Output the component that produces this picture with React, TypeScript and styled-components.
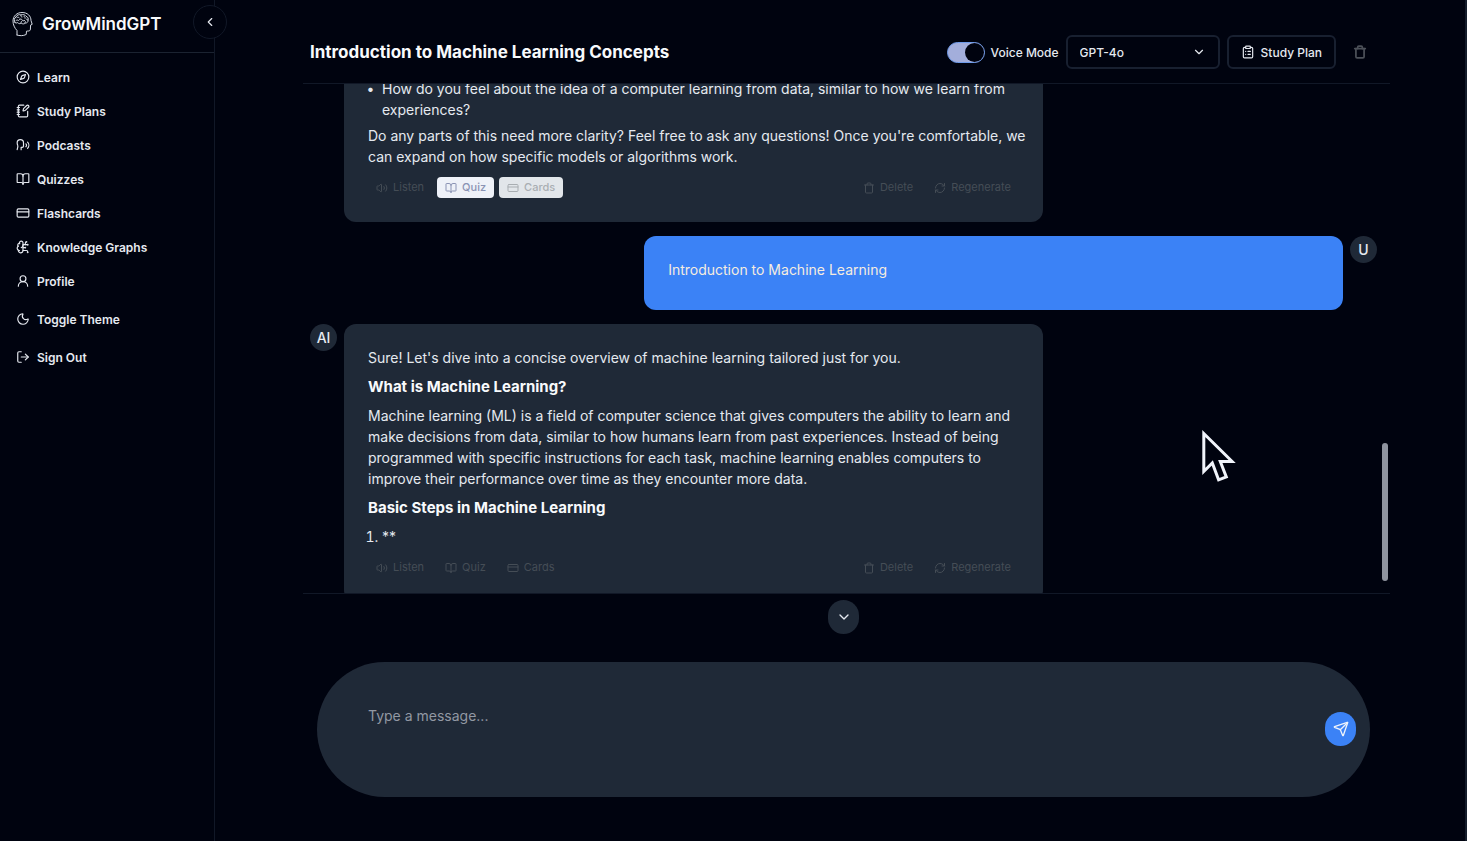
import React from 'react';
import styled, { createGlobalStyle } from 'styled-components';
import {
  BookOpen, BrainCircuit, ChevronDown, ChevronLeft, ClipboardList, Compass, CreditCard,
  LogOut, Moon, NotebookPen, RefreshCw, Send, Speech, Trash, UserRound, Volume2,
} from 'lucide-react';

const c = {
  bg: '#00030f',
  surface: '#1f2937',
  line: '#111827',
  outline: '#182030',
  text: '#e5e9f0',
  bright: '#f8fafc',
  muted: '#9298a3',
  faint: '#454d56',
  blue: '#3b82f6',
};

const GlobalStyle = createGlobalStyle`
  *, *::before, *::after { box-sizing: border-box; }
  body {
    margin: 0;
    background: ${c.bg};
    color: ${c.text};
    font-family: Inter, "Liberation Sans", sans-serif;
    font-size: 14px;
    line-height: 21px;
  }
  button, input, select, textarea { font: inherit; color: inherit; }
  h1, h2, h3, p, ul, ol { margin: 0; padding: 0; }
`;

const Shell = styled.div`
  display: flex;
  min-height: 100vh;
  border-right: 2px solid #141c2a;
`;

const Sidebar = styled.aside`
  position: relative;
  flex: 0 0 215px;
  border-right: 1px solid ${c.line};
`;

const Brand = styled.div`
  display: flex;
  align-items: center;
  gap: 8px;
  height: 53px;
  padding: 0 10px 4px;
  border-bottom: 1px solid #1b2331;
  color: ${c.bright};
  font-size: 17px;
  font-weight: 600;
`;

const Collapse = styled.button`
  position: absolute;
  top: 5px;
  right: -13px;
  display: grid;
  place-items: center;
  width: 34px;
  height: 34px;
  padding: 0;
  border: 1px solid ${c.line};
  border-radius: 50%;
  background: ${c.bg};
`;

const Nav = styled.nav`
  display: flex;
  flex-direction: column;
  padding: 7px 10px;
`;

const NavItem = styled.a<{ $spaced?: boolean }>`
  display: flex;
  align-items: center;
  gap: 7px;
  height: 34px;
  margin-top: ${p => (p.$spaced ? 4 : 0)}px;
  padding: 0 6px;
  color: ${c.text};
  font-size: 12px;
  font-weight: 600;
  text-decoration: none;
`;

const Main = styled.main`
  display: flex;
  flex: 1;
  flex-direction: column;
  min-width: 0;
  height: 100vh;
  padding: 0 75px 44px 88px;
`;

const Header = styled.header`
  display: flex;
  align-items: center;
  justify-content: space-between;
  padding: 35px 13px 14px 7px;
  border-bottom: 1px solid ${c.line};
`;

const Title = styled.h1`
  color: ${c.bright};
  font-size: 17px;
  font-weight: 700;
`;

const Actions = styled.div`
  display: flex;
  align-items: center;
  gap: 7px;
  font-size: 12px;
  font-weight: 500;
`;

const VoiceLabel = styled.label`
  display: flex;
  align-items: center;
  gap: 6px;
`;

const Toggle = styled.input`
  display: flex;
  justify-content: flex-end;
  width: 38px;
  height: 21px;
  margin: 0;
  padding: 0;
  border: 1px solid #6f9bea;
  border-radius: 11px;
  background: #a3aedb;
  appearance: none;

  &::before {
    content: '';
    width: 19px;
    height: 19px;
    border-radius: 50%;
    background: ${c.bg};
  }
`;

const SelectWrap = styled.div`
  display: grid;
  align-items: center;
  width: 154px;

  > * { grid-area: 1 / 1; }
  > svg { justify-self: end; margin-right: 14px; pointer-events: none; }
`;

const Select = styled.select`
  width: 100%;
  height: 34px;
  padding: 0 12px;
  border: 2px solid ${c.outline};
  border-radius: 6px;
  background: ${c.bg};
  appearance: none;
`;

const OutlineButton = styled.button`
  display: flex;
  align-items: center;
  gap: 6px;
  height: 34px;
  padding: 0 12px;
  border: 2px solid ${c.outline};
  border-radius: 6px;
  background: transparent;
`;

const IconButton = styled.button`
  display: grid;
  place-items: center;
  width: 34px;
  height: 34px;
  padding: 0;
  border: 0;
  background: transparent;
  color: #4b5058;
`;

const ChatFrame = styled.section`
  position: relative;
  flex: 1;
  min-height: 0;
  border-bottom: 1px solid ${c.line};
`;

const Messages = styled.div`
  height: 100%;
  overflow: hidden;
  padding: 0 13px 0 7px;
`;

const Thread = styled.div`
  display: flex;
  flex-direction: column;
  gap: 14px;
  margin-top: -29px;
`;

const ScrollThumb = styled.div`
  position: absolute;
  right: 2px;
  bottom: 12px;
  width: 6px;
  height: 138px;
  border-radius: 3px;
  background: #8f949f;
`;

const Message = styled.article<{ $own?: boolean }>`
  display: flex;
  flex-direction: ${p => (p.$own ? 'row-reverse' : 'row')};
  align-items: flex-start;
  gap: 7px;
`;

const Avatar = styled.span<{ $hidden?: boolean }>`
  display: grid;
  place-items: center;
  width: 27px;
  height: 27px;
  border-radius: 50%;
  background: ${c.surface};
  font-weight: 500;
  visibility: ${p => (p.$hidden ? 'hidden' : 'visible')};
`;

const Bubble = styled.div<{ $own?: boolean }>`
  width: 65.5%;
  padding: ${p => (p.$own ? '23px 12px 30px 24px' : '23px 12px 24px 24px')};
  border-radius: 12px;
  background: ${p => (p.$own ? c.blue : c.surface)};
  color: ${p => (p.$own ? '#f5ecdf' : c.text)};
`;

const Text = styled.p`
  & + & { margin-top: 6px; }
`;

const Heading = styled.h2`
  margin: 8px 0;
  color: ${c.bright};
  font-size: 15px;
  font-weight: 700;
  line-height: 21px;
`;

const Bullets = styled.ul`
  margin-bottom: 5px;
  padding-left: 14px;
  list-style-type: '•  ';
`;

const Steps = styled.ol`
  padding-left: 14px;
`;

const Tools = styled.div`
  display: flex;
  gap: 5px;
  margin: 10px 12px 0 0;
`;

const Tool = styled.button<{ $look?: 'light' | 'fading'; $push?: boolean }>`
  display: flex;
  align-items: center;
  gap: 5px;
  height: 21px;
  margin-left: ${p => (p.$push ? 'auto' : '0')};
  padding: 0 8px;
  border: 0;
  border-radius: 4px;
  background: ${p => (p.$look === 'light' ? '#eef1f8' : p.$look === 'fading' ? '#e2e6ea' : 'transparent')};
  color: ${p => (p.$look === 'light' ? '#8a93b4' : p.$look === 'fading' ? '#a9aeb2' : c.faint)};
  font-size: 11px;
  font-weight: ${p => (p.$look ? 500 : 400)};
`;

const ScrollDown = styled.button`
  display: grid;
  place-items: center;
  align-self: center;
  width: 31px;
  height: 34px;
  margin: 6px 6px 28px 0;
  padding: 0;
  border: 0;
  border-radius: 16px;
  background: ${c.surface};
`;

const Composer = styled.form`
  display: flex;
  align-items: center;
  gap: 14px;
  height: 135px;
  margin: 0 20px 0 14px;
  padding: 0 14px 2px 51px;
  border-radius: 68px;
  background: ${c.surface};
`;

const Input = styled.textarea`
  flex: 1;
  height: 48px;
  padding: 0;
  border: 0;
  outline: 0;
  resize: none;
  background: transparent;

  &::placeholder { color: ${c.muted}; opacity: 1; }
`;

const SendButton = styled.button`
  display: grid;
  place-items: center;
  width: 31px;
  height: 34px;
  padding: 0;
  border: 0;
  border-radius: 16px;
  background: ${c.blue};
  color: #eef3fb;
`;

const Pointer = styled.svg`
  position: fixed;
  left: 1200px;
  top: 427px;
  pointer-events: none;
`;

function Logo() {
  return (
    <svg width="24" height="26" viewBox="0 0 24 26" fill="none" stroke="#d5dae3" strokeWidth="1" strokeLinecap="round" strokeLinejoin="round" aria-hidden="true">
      <path d="M7 24v-4.500C4.500 17 3 13.500 3 10 3 5 7 1.500 12 1.500c5.500 0 9 3.500 9 8l1.200 3.800-1.600.8-.2 4c0 1.500-1 2-2.600 1.900l-1.300.2-.3 3.300C13 25 9.500 25 7 24" />
      <path d="M5 11.500c-1.300-2-.8-4.500 1-5.500C7 3.800 9.200 3.200 11 4c2-.9 4.200-.2 5 1.300 1.900.5 2.700 2.400 2 4 .3 1.600-1 2.900-2.600 2.700-1.200 1.200-3 1.100-4 .2-1.500.8-3 .5-3.700-.6-1 .6-2 .5-2.700-.1Z" />
      <path d="M7 6.500c1-.6 2-.3 2.500.5M11 4c-.6 1 0 2 1 2M14 5.500c1 .2 1.500 1 1.200 1.800M6 9.500c1-.8 2.200-.6 2.800.3M9.500 8.500c1-.8 2.200-.6 2.600.4s1.600 1.200 2.500.6M11 12c-.3-.8 0-1.500.8-1.800M15 12c-.2-.6 0-1.200.5-1.600M16.500 8.200l1.500 1" />
    </svg>
  );
}

const navItems = [
  { icon: Compass, label: 'Learn' },
  { icon: NotebookPen, label: 'Study Plans' },
  { icon: Speech, label: 'Podcasts' },
  { icon: BookOpen, label: 'Quizzes' },
  { icon: CreditCard, label: 'Flashcards' },
  { icon: BrainCircuit, label: 'Knowledge Graphs' },
  { icon: UserRound, label: 'Profile' },
  { icon: Moon, label: 'Toggle Theme', spaced: true },
  { icon: LogOut, label: 'Sign Out', spaced: true },
];

function MessageTools({ active }: { active?: boolean }) {
  return (
    <Tools>
      <Tool><Volume2 size={12} />Listen</Tool>
      <Tool $look={active ? 'light' : undefined}><BookOpen size={12} />Quiz</Tool>
      <Tool $look={active ? 'fading' : undefined}><CreditCard size={12} />Cards</Tool>
      <Tool $push><Trash size={12} />Delete</Tool>
      <Tool><RefreshCw size={12} />Regenerate</Tool>
    </Tools>
  );
}

export default function App() {
  return (
    <>
      <GlobalStyle />
      <Shell>
        <Sidebar>
          <Brand><Logo />GrowMindGPT</Brand>
          <Collapse aria-label="Collapse sidebar"><ChevronLeft size={14} /></Collapse>
          <Nav>
            {navItems.map(({ icon: Icon, label, spaced }) => (
              <NavItem key={label} href="#" $spaced={spaced}><Icon size={14} />{label}</NavItem>
            ))}
          </Nav>
        </Sidebar>
        <Main>
          <Header>
            <Title>Introduction to Machine Learning Concepts</Title>
            <Actions>
              <VoiceLabel><Toggle type="checkbox" role="switch" defaultChecked />Voice Mode</VoiceLabel>
              <SelectWrap>
                <Select aria-label="Model" defaultValue="GPT-4o"><option>GPT-4o</option></Select>
                <ChevronDown size={14} />
              </SelectWrap>
              <OutlineButton><ClipboardList size={14} />Study Plan</OutlineButton>
              <IconButton aria-label="Delete chat"><Trash size={14} strokeWidth={3} /></IconButton>
            </Actions>
          </Header>
          <ChatFrame>
            <Messages>
              <Thread>
                <Message>
                  <Avatar $hidden>AI</Avatar>
                  <Bubble>
                    <Bullets>
                      <li>How do you feel about the idea of a computer learning from data, similar to how we learn from experiences?</li>
                    </Bullets>
                    <Text>Do any parts of this need more clarity? Feel free to ask any questions! Once you're comfortable, we can expand on how specific models or algorithms work.</Text>
                    <MessageTools active />
                  </Bubble>
                </Message>
                <Message $own>
                  <Avatar>U</Avatar>
                  <Bubble $own><Text>Introduction to Machine Learning</Text></Bubble>
                </Message>
                <Message>
                  <Avatar>AI</Avatar>
                  <Bubble>
                    <Text>Sure! Let's dive into a concise overview of machine learning tailored just for you.</Text>
                    <Heading>What is Machine Learning?</Heading>
                    <Text>Machine learning (ML) is a field of computer science that gives computers the ability to learn and make decisions from data, similar to how humans learn from past experiences. Instead of being programmed with specific instructions for each task, machine learning enables computers to improve their performance over time as they encounter more data.</Text>
                    <Heading>Basic Steps in Machine Learning</Heading>
                    <Steps><li>**</li></Steps>
                    <MessageTools />
                  </Bubble>
                </Message>
              </Thread>
            </Messages>
            <ScrollThumb />
          </ChatFrame>
          <ScrollDown aria-label="Scroll to latest"><ChevronDown size={16} /></ScrollDown>
          <Composer>
            <Input aria-label="Message" placeholder="Type a message..." />
            <SendButton type="button" aria-label="Send"><Send size={16} /></SendButton>
          </Composer>
        </Main>
      </Shell>
      <Pointer width="40" height="60" viewBox="0 0 40 60" fill={c.bg} stroke="#f1f4fb" strokeWidth="3" aria-hidden="true">
        <path d="M3.800 6.500v38l8.500-8.500 6.300 16.800 7.700-2.900-6-15.400h11.800Z" />
      </Pointer>
    </>
  );
}
